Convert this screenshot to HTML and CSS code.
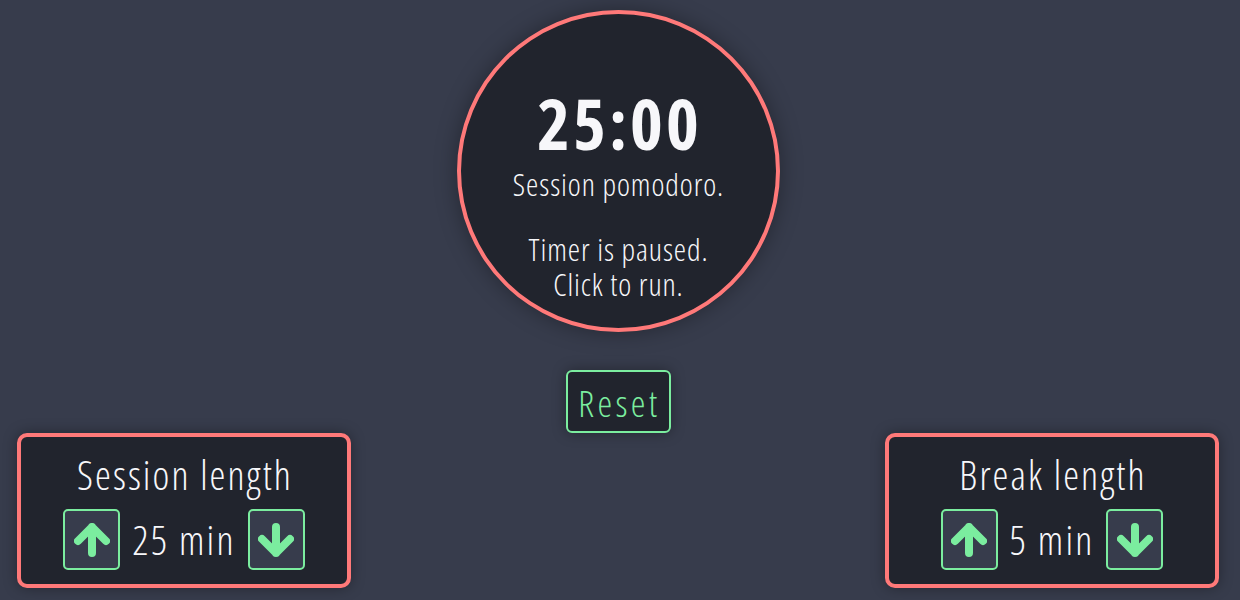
FILE: index.html
```html
<!DOCTYPE html>
<html lang="en">
<head>
<meta charset="utf-8">
<title>Pomodoro</title>
<link rel="stylesheet" href="styles.css">
</head>
<body>
<main class="app">
  <div class="clock">
    <div class="time">25:00</div>
    <p class="label">Session pomodoro.</p>
    <p class="status">Timer is paused.<br>Click to run.</p>
  </div>
  <button class="reset">Reset</button>
  <div class="settings">
    <section class="panel">
      <h2 class="panel-title">Session length</h2>
      <div class="control">
        <button class="step"><svg class="arrow" viewBox="0 0 36 34"><path d="M4 18 L18 4 L32 18 M18 4 V30"/></svg></button>
        <span class="value">25 min</span>
        <button class="step"><svg class="arrow" viewBox="0 0 36 34"><path d="M4 16 L18 30 L32 16 M18 30 V4"/></svg></button>
      </div>
    </section>
    <section class="panel">
      <h2 class="panel-title">Break length</h2>
      <div class="control">
        <button class="step"><svg class="arrow" viewBox="0 0 36 34"><path d="M4 18 L18 4 L32 18 M18 4 V30"/></svg></button>
        <span class="value">5 min</span>
        <button class="step"><svg class="arrow" viewBox="0 0 36 34"><path d="M4 16 L18 30 L32 16 M18 30 V4"/></svg></button>
      </div>
    </section>
  </div>
</main>
</body>
</html>
```
FILE: styles.css
```css
* { box-sizing: border-box; }
html, body {
  margin: 0;
  height: 600px;
  overflow: hidden;
  background: #373c4c;
}
body {
  font-family: "Open Sans", "Liberation Sans", sans-serif;
  font-stretch: 75%;
  font-weight: 300;
  color: #f7f7fa;
}
.app {
  width: 1236px;
  display: flex;
  flex-direction: column;
  align-items: center;
  padding-top: 10px;
}
.clock {
  width: 323px;
  height: 322px;
  border: 4px solid #ff7979;
  border-radius: 50%;
  background: #21242d;
  box-shadow: 0 0 22px rgba(0, 0, 0, 0.35);
  display: flex;
  flex-direction: column;
  align-items: center;
  padding-top: 73px;
  text-align: center;
}
.time {
  font-size: 70px;
  font-weight: 700;
  line-height: 72px;
  letter-spacing: 3px;
  padding-left: 3px;
}
.label {
  margin: 8px 0 0;
  font-size: 31px;
  line-height: 35px;
  letter-spacing: 0.9px;
  padding-left: 1px;
}
.status {
  margin: 30px 0 0;
  font-size: 31px;
  line-height: 35px;
  letter-spacing: 0.9px;
  padding-left: 1px;
}
.reset {
  margin-top: 38px;
  width: 105px;
  height: 63px;
  border: 2px solid #7bed9f;
  border-radius: 6px;
  background: #21242d;
  color: #7bed9f;
  font-family: inherit;
  font-stretch: 75%;
  font-weight: 300;
  font-size: 37px;
  letter-spacing: 3.4px;
  padding: 2px 0 0 3px;
  display: flex;
  align-items: center;
  justify-content: center;
  box-shadow: 0 0 14px rgba(0, 0, 0, 0.35);
}
.settings {
  width: 100%;
  display: flex;
  justify-content: space-between;
  padding: 0 17px;
}
.panel {
  width: 334px;
  height: 155px;
  border: 4px solid #ff7979;
  border-radius: 10px;
  background: #21242d;
  box-shadow: 0 0 14px rgba(0, 0, 0, 0.35);
  display: flex;
  flex-direction: column;
  align-items: center;
  padding-top: 14px;
}
.panel-title {
  margin: 0;
  font-size: 40px;
  font-weight: 300;
  line-height: 48px;
  letter-spacing: 2.1px;
  padding-left: 2px;
}
.control {
  margin-top: 10px;
  display: flex;
  align-items: center;
  gap: 12px;
}
.value {
  font-size: 40px;
  line-height: 48px;
  letter-spacing: 2.2px;
}
.step {
  width: 57px;
  height: 61px;
  border: 2px solid #7bed9f;
  border-radius: 5px;
  background: #373c4c;
  padding: 0;
  display: flex;
  align-items: center;
  justify-content: center;
}
.arrow {
  width: 36px;
  height: 34px;
  fill: none;
  stroke: #7bed9f;
  stroke-width: 8;
  stroke-linecap: round;
  stroke-linejoin: round;
}
```
